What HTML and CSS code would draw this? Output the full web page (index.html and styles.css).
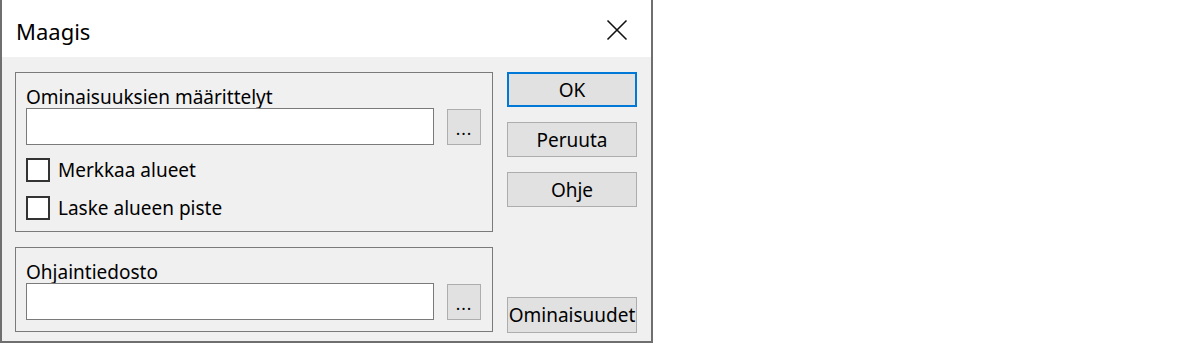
FILE: index.html
```html
<!DOCTYPE html>
<html lang="fi">
<head>
    <meta charset="UTF-8">
    <title>Maagis</title>
    <link rel="stylesheet" href="styles.css">
</head>
<body>
    <div class="window">
        <div class="titlebar">
            <div class="title">Maagis</div>
            <div class="close">
                <svg width="22" height="22" viewBox="0 0 22 22">
                    <path d="M1.5 1.5 L20.5 20.5 M20.5 1.5 L1.5 20.5" stroke="#111" stroke-width="1.6" fill="none"/>
                </svg>
            </div>
        </div>
        <div class="content">
            <div class="left">
                <div class="group group-1">
                    <div class="label">Ominaisuuksien määrittelyt</div>
                    <div class="row">
                        <div class="input"></div>
                        <div class="btn browse">...</div>
                    </div>
                    <div class="check">
                        <div class="box"></div>
                        <span>Merkkaa alueet</span>
                    </div>
                    <div class="check">
                        <div class="box"></div>
                        <span>Laske alueen piste</span>
                    </div>
                </div>
                <div class="group group-2">
                    <div class="label">Ohjaintiedosto</div>
                    <div class="row">
                        <div class="input"></div>
                        <div class="btn browse">...</div>
                    </div>
                </div>
            </div>
            <div class="right">
                <div class="btn action default">OK</div>
                <div class="btn action">Peruuta</div>
                <div class="btn action">Ohje</div>
                <div class="btn action bottom">Ominaisuudet</div>
            </div>
        </div>
    </div>
</body>
</html>
```

FILE: styles.css
```css
* {box-sizing: border-box;}
body {
    margin: 0;
    background: #fff;
    font-family: "Noto Sans", "Open Sans", sans-serif;
    color: #000;
}
.window {
    width: 653px;
    height: 343px;
    background: #f0f0f0;
    border: 2px solid #6f6f6f;
    border-top: none;
    display: flex;
    flex-direction: column;
}
.titlebar {
    height: 57px;
    background: #fff;
    display: flex;
    align-items: center;
    justify-content: space-between;
    padding: 0 23px 0 14px;
}
.title {
    font-size: 22px;
    margin-top: 4px;
}
.close {
    display: flex;
    margin-top: 2px;
}
.content {
    display: flex;
    padding: 15px 0 0 13px;
    flex: 1;
}
.left {
    display: flex;
    flex-direction: column;
    gap: 15px;
    width: 478px;
}
.group {
    border: 1px solid #7a7a7a;
    padding: 13px 0 0 10px;
}
.group-1 {
    height: 160px;
}
.group-2 {
    height: 85px;
}
.label {
    font-size: 19px;
    line-height: 22px;
}
.row {
    display: flex;
    align-items: center;
    gap: 13px;
}
.input {
    width: 408px;
    height: 37px;
    background: #fff;
    border: 1px solid #7a7a7a;
}
.btn {
    background: #e1e1e1;
    border: 1px solid #adadad;
    display: flex;
    align-items: center;
    justify-content: center;
    font-size: 19px;
}
.browse {
    width: 34px;
    height: 36px;
    font-size: 17px;
    letter-spacing: 1px;
    padding-top: 4px;
}
.check {
    display: flex;
    align-items: center;
    gap: 8px;
    font-size: 19px;
    line-height: 24px;
    margin-top: 13px;
}
.check + .check {
    margin-top: 14px;
}
.box {
    width: 24px;
    height: 24px;
    background: #fff;
    border: 2px solid #333;
}
.right {
    display: flex;
    flex-direction: column;
    gap: 15px;
    margin-left: 14px;
    width: 130px;
    padding-bottom: 8px;
}
.action {
    height: 35px;
}
.default {
    border: 2px solid #0078d7;
}
.bottom {
    margin-top: auto;
    height: 36px;
}
```
